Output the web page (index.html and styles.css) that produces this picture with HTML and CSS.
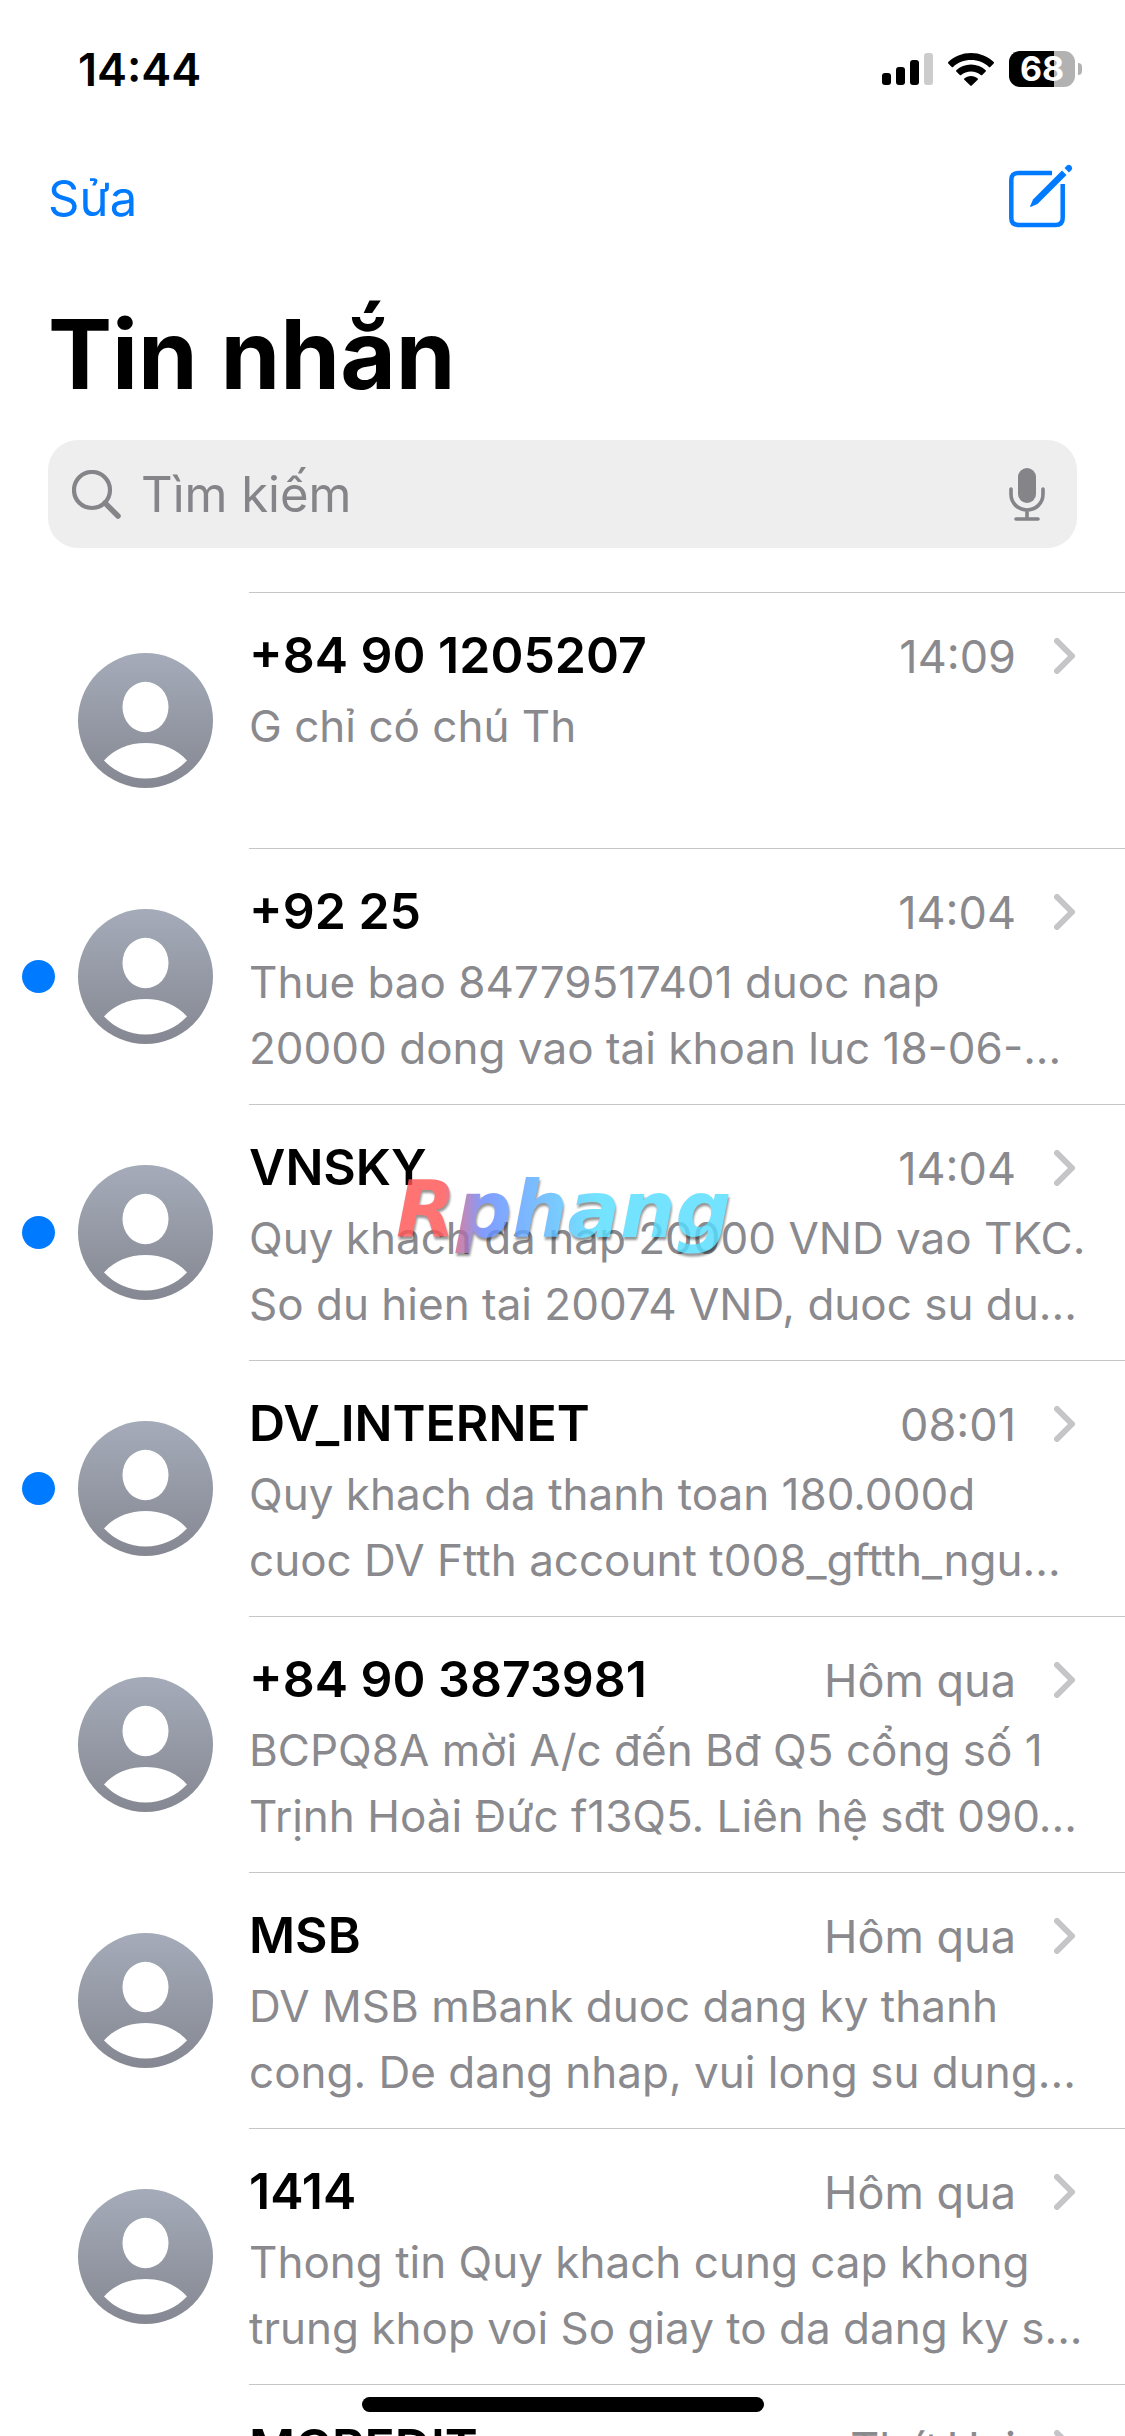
FILE: index.html
```html
<!DOCTYPE html>
<html lang="vi">
<head>
    <meta charset="UTF-8" />
    <meta name="viewport" content="width=device-width, initial-scale=1.0"/>
    <title>Tin nhắn</title>
    <link rel="stylesheet" href="styles.css">
</head>
<body>
    <!-- Shared icons -->
    <svg class="icon-defs" aria-hidden="true">
        <defs>
            <linearGradient id="avatar-fill" x1="0" y1="0" x2="0" y2="1">
                <stop offset="0" stop-color="#a5abb9"/>
                <stop offset="1" stop-color="#858892"/>
            </linearGradient>
            <symbol id="avatar" viewBox="0 0 135 135">
                <circle cx="67.5" cy="67.5" r="67.5" fill="url(#avatar-fill)"/>
                <ellipse cx="67.5" cy="54" rx="23" ry="25.3" fill="#fff"/>
                <path d="M26 107.5C36 96 51 90 67.5 90S99 96 109 107.5C98 119 83.500 125.500 67.500 125.500S37 119 26 107.500Z" fill="#fff"/>
            </symbol>
            <symbol id="chevron" viewBox="0 0 21 36">
                <path d="M3 3l15 15L3 33" fill="none" stroke="#c5c5c7" stroke-width="6" stroke-linecap="round" stroke-linejoin="round"/>
            </symbol>
        </defs>
    </svg>

    <div class="screen">
        <header class="status-bar">
            <span class="clock">14:44</span>
            <div class="status-icons">
                <svg class="signal" viewBox="0 0 51 32" aria-hidden="true">
                    <rect x="0" y="20" width="9" height="12" rx="3"/>
                    <rect x="14" y="14" width="9" height="18" rx="3"/>
                    <rect x="28" y="7" width="9" height="25" rx="3"/>
                    <rect x="42" y="0" width="9" height="32" rx="3" fill="#ccc"/>
                </svg>
                <svg class="wifi" viewBox="0 0 46 33" aria-hidden="true">
                    <path d="M23 0C31.900 0 39.900 3.400 45.700 9.100Q46.300 9.800 45.700 10.500L42.300 13.900Q41.600 14.500 40.900 13.900C36.200 9.500 30 7 23 7S9.800 9.500 5.100 13.900Q4.400 14.500 3.700 13.900L.3 10.500Q-.3 9.800.3 9.100C6.100 3.400 14.100 0 23 0Z"/>
                    <path d="M23 11.500C28.600 11.500 33.800 13.600 37.700 17.200Q38.300 17.900 37.700 18.600L34.200 22Q33.500 22.600 32.800 22C30.200 19.700 26.800 18.400 23 18.400S15.800 19.700 13.200 22Q12.500 22.600 11.800 22L8.300 18.600Q7.700 17.900 8.300 17.200C12.200 13.600 17.400 11.500 23 11.500Z"/>
                    <path d="M23 23C25.600 23 27.900 23.900 29.700 25.400Q30.300 26 29.700 26.700L23.700 32.600Q23 33.200 22.300 32.600L16.300 26.700Q15.700 26 16.300 25.400C18.100 23.900 20.400 23 23 23Z"/>
                </svg>
                <div class="battery"><span class="battery-level">68</span></div>
            </div>
        </header>

        <nav class="toolbar">
            <a href="#edit" class="edit-link">Sửa</a>
            <button type="button" class="compose" aria-label="Tin nhắn mới">
                <svg viewBox="0 0 64 64" aria-hidden="true">
                    <path d="M43 9H9.500Q2.300 9 2.300 16V54Q2.300 61 9.500 61H46.500Q53.700 61 53.700 54V20" fill="none" stroke="#007aff" stroke-width="4.500"/>
                    <path d="M53 6.500L57.500 11L28.500 40L21.500 43L21 42.500L24 35.500Z" fill="#007aff"/>
                    <path d="M55.500 4L58 1.500Q59.800 0 61.600 1.500L62.500 2.400Q64 4.200 62.500 6L60 8.500Z" fill="#007aff"/>
                </svg>
            </button>
        </nav>

        <main>
            <h1>Tin nhắn</h1>

            <div class="search">
                <svg class="search-icon" viewBox="0 0 49 49" aria-hidden="true">
                    <circle cx="20" cy="20" r="18" fill="none" stroke="#848489" stroke-width="4.200"/>
                    <path d="M33 33L46 46" stroke="#848489" stroke-width="5.500" stroke-linecap="round"/>
                </svg>
                <input type="text" placeholder="Tìm kiếm" aria-label="Tìm kiếm">
                <button type="button" class="mic" aria-label="Đọc chính tả">
                    <svg viewBox="0 0 36 53" aria-hidden="true">
                        <rect x="9" y="0" width="18" height="35" rx="9" fill="#848489"/>
                        <path d="M2 21V26C2 35 9 42 18 42S34 35 34 26V21M18 42V51M7 51H29" fill="none" stroke="#848489" stroke-width="3.600" stroke-linecap="round"/>
                    </svg>
                </button>
            </div>

            <ul class="messages">
                <li>
                    <a href="#m1" class="message">
                        <span class="dot"></span>
                        <svg class="avatar"><use href="#avatar"/></svg>
                        <div class="message-body">
                            <div class="message-top">
                                <strong>+84 90 1205207</strong>
                                <time>14:09</time>
                                <svg class="chevron"><use href="#chevron"/></svg>
                            </div>
                            <p>G chỉ có chú Th</p>
                        </div>
                    </a>
                </li>
                <li>
                    <a href="#m2" class="message">
                        <span class="dot unread"></span>
                        <svg class="avatar"><use href="#avatar"/></svg>
                        <div class="message-body">
                            <div class="message-top">
                                <strong>+92 25</strong>
                                <time>14:04</time>
                                <svg class="chevron"><use href="#chevron"/></svg>
                            </div>
                            <p>Thue bao 84779517401 duoc nap<br>20000 dong vao tai khoan luc 18-06-...</p>
                        </div>
                    </a>
                </li>
                <li>
                    <a href="#m3" class="message">
                        <span class="dot unread"></span>
                        <svg class="avatar"><use href="#avatar"/></svg>
                        <div class="message-body">
                            <div class="message-top">
                                <strong>VNSKY</strong>
                                <time>14:04</time>
                                <svg class="chevron"><use href="#chevron"/></svg>
                            </div>
                            <p>Quy khach da nap 20000 VND vao TKC.<br>So du hien tai 20074 VND, duoc su du...</p>
                        </div>
                    </a>
                </li>
                <li>
                    <a href="#m4" class="message">
                        <span class="dot unread"></span>
                        <svg class="avatar"><use href="#avatar"/></svg>
                        <div class="message-body">
                            <div class="message-top">
                                <strong>DV_INTERNET</strong>
                                <time>08:01</time>
                                <svg class="chevron"><use href="#chevron"/></svg>
                            </div>
                            <p>Quy khach da thanh toan 180.000d<br>cuoc DV Ftth account t008_gftth_ngu...</p>
                        </div>
                    </a>
                </li>
                <li>
                    <a href="#m5" class="message">
                        <span class="dot"></span>
                        <svg class="avatar"><use href="#avatar"/></svg>
                        <div class="message-body">
                            <div class="message-top">
                                <strong>+84 90 3873981</strong>
                                <time>Hôm qua</time>
                                <svg class="chevron"><use href="#chevron"/></svg>
                            </div>
                            <p>BCPQ8A mời A/c đến Bđ Q5 cổng số 1<br>Trịnh Hoài Đức f13Q5. Liên hệ sđt 090...</p>
                        </div>
                    </a>
                </li>
                <li>
                    <a href="#m6" class="message">
                        <span class="dot"></span>
                        <svg class="avatar"><use href="#avatar"/></svg>
                        <div class="message-body">
                            <div class="message-top">
                                <strong>MSB</strong>
                                <time>Hôm qua</time>
                                <svg class="chevron"><use href="#chevron"/></svg>
                            </div>
                            <p>DV MSB mBank duoc dang ky thanh<br>cong. De dang nhap, vui long su dung...</p>
                        </div>
                    </a>
                </li>
                <li>
                    <a href="#m7" class="message">
                        <span class="dot"></span>
                        <svg class="avatar"><use href="#avatar"/></svg>
                        <div class="message-body">
                            <div class="message-top">
                                <strong>1414</strong>
                                <time>Hôm qua</time>
                                <svg class="chevron"><use href="#chevron"/></svg>
                            </div>
                            <p>Thong tin Quy khach cung cap khong<br>trung khop voi So giay to da dang ky s...</p>
                        </div>
                    </a>
                </li>
                <li>
                    <a href="#m8" class="message">
                        <span class="dot"></span>
                        <svg class="avatar"><use href="#avatar"/></svg>
                        <div class="message-body">
                            <div class="message-top">
                                <strong>MCREDIT</strong>
                                <time>Thứ Hai</time>
                                <svg class="chevron"><use href="#chevron"/></svg>
                            </div>
                        </div>
                    </a>
                </li>
            </ul>
        </main>

        <div class="watermark">Rphang</div>
        <div class="home-indicator"></div>
    </div>
</body>
</html>
```
FILE: styles.css
```css
:root {
    --blue: #007aff;
    --gray: #8a8a8e;
    --search-gray: #848489;
    --search-bg: #eeeeee;
    --line: #c6c6c8;
    --side: 48px;
}
* {
    box-sizing: border-box;
}
body {
    margin: 0;
    background-color: #fff;
    color: #000;
    font-family: 'Inter', 'Liberation Sans', sans-serif;
}
.icon-defs {
    position: absolute;
    width: 0;
    height: 0;
}
.screen {
    position: relative;
    height: 100vh;
    overflow: hidden;
}
button {
    border: 0;
    padding: 0;
    background: none;
}
svg {
    display: block;
    flex-shrink: 0;
}

/* Status bar */
.status-bar {
    display: flex;
    justify-content: space-between;
    align-items: center;
    height: 138px;
    padding: 0 43px 0 78px;
}
.clock {
    font-size: 45px;
    font-weight: 600;
}
.status-icons {
    display: flex;
    align-items: center;
    gap: 15px;
}
.signal { width: 51px; height: 32px; }
.wifi { width: 46px; height: 33px; }
.battery {
    position: relative;
    width: 66px;
    height: 36px;
    margin-right: 7px;
    border-radius: 11px;
    background: linear-gradient(to right, #000 68%, #b2b2b2 68%);
}
.battery::after {
    content: '';
    position: absolute;
    top: 12px;
    right: -7px;
    width: 4px;
    height: 12px;
    border-radius: 0 6px 6px 0;
    background-color: #b2b2b2;
}
.battery-level {
    display: block;
    color: #fff;
    font-size: 34px;
    font-weight: 700;
    line-height: 36px;
    text-align: center;
}

/* Toolbar */
.toolbar {
    display: flex;
    justify-content: space-between;
    align-items: center;
    height: 120px;
    padding: 0 52px 0 var(--side);
}
.edit-link {
    color: var(--blue);
    font-size: 49px;
    text-decoration: none;
}
.compose {
    margin-bottom: 4px;
}
.compose svg {
    width: 64px;
    height: 64px;
}

h1 {
    margin: 28px var(--side) 18px;
    font-size: 96px;
    font-weight: 700;
    line-height: 136px;
}

/* Search box */
.search {
    display: flex;
    align-items: center;
    gap: 20px;
    height: 108px;
    margin: 0 var(--side) 44px;
    padding: 0 32px 0 24px;
    border-radius: 30px;
    background-color: var(--search-bg);
}
.search-icon { width: 49px; height: 49px; }
.search input {
    flex: 1;
    min-width: 0;
    border: 0;
    padding: 0;
    outline: none;
    background: none;
    font-family: inherit;
    font-size: 49px;
}
.search input::placeholder {
    color: var(--search-gray);
    opacity: 1;
}
.mic svg {
    width: 36px;
    height: 53px;
}

/* Message list */
.messages {
    margin: 0;
    padding: 0;
    list-style: none;
}
.message {
    display: flex;
    align-items: center;
    min-height: 256px;
    padding-left: 22px;
    color: inherit;
    text-decoration: none;
}
.dot {
    flex-shrink: 0;
    width: 33px;
    height: 33px;
    margin-right: 23px;
    border-radius: 50%;
}
.dot.unread {
    background-color: var(--blue);
}
.avatar {
    width: 135px;
    height: 135px;
    margin-right: 36px;
}
.message-body {
    flex: 1;
    align-self: stretch;
    min-width: 0;
    padding: 32px 50px 0 0;
    border-top: 1px solid var(--line);
    white-space: nowrap;
}
.message-top {
    display: flex;
    align-items: baseline;
    line-height: 60px;
}
.message-top strong {
    flex: 1;
    font-size: 50px;
    font-weight: 600;
}
.message-top time {
    margin-right: 38px;
    color: var(--gray);
    font-size: 45px;
}
.chevron {
    align-self: center;
    width: 21px;
    height: 36px;
}
.message-body p {
    margin: 6px 0 0;
    color: var(--gray);
    font-size: 44px;
    line-height: 66px;
}

/* Overlays */
.watermark {
    position: absolute;
    top: 1160px;
    left: 396px;
    background: linear-gradient(to right, #ff5555 14%, #6688ff 26%, #55ddff 60%);
    background-clip: text;
    -webkit-background-clip: text;
    color: transparent;
    filter: drop-shadow(1px 3px 1px rgba(0,0,0,0.5));
    font-family: 'DejaVu Sans', sans-serif;
    font-size: 78px;
    font-style: oblique;
    font-weight: 700;
    line-height: 100px;
    opacity: 0.82;
}
.home-indicator {
    position: absolute;
    bottom: 24px;
    left: 50%;
    width: 402px;
    height: 15px;
    border-radius: 8px;
    background-color: #000;
    transform: translateX(-50%);
}
```
